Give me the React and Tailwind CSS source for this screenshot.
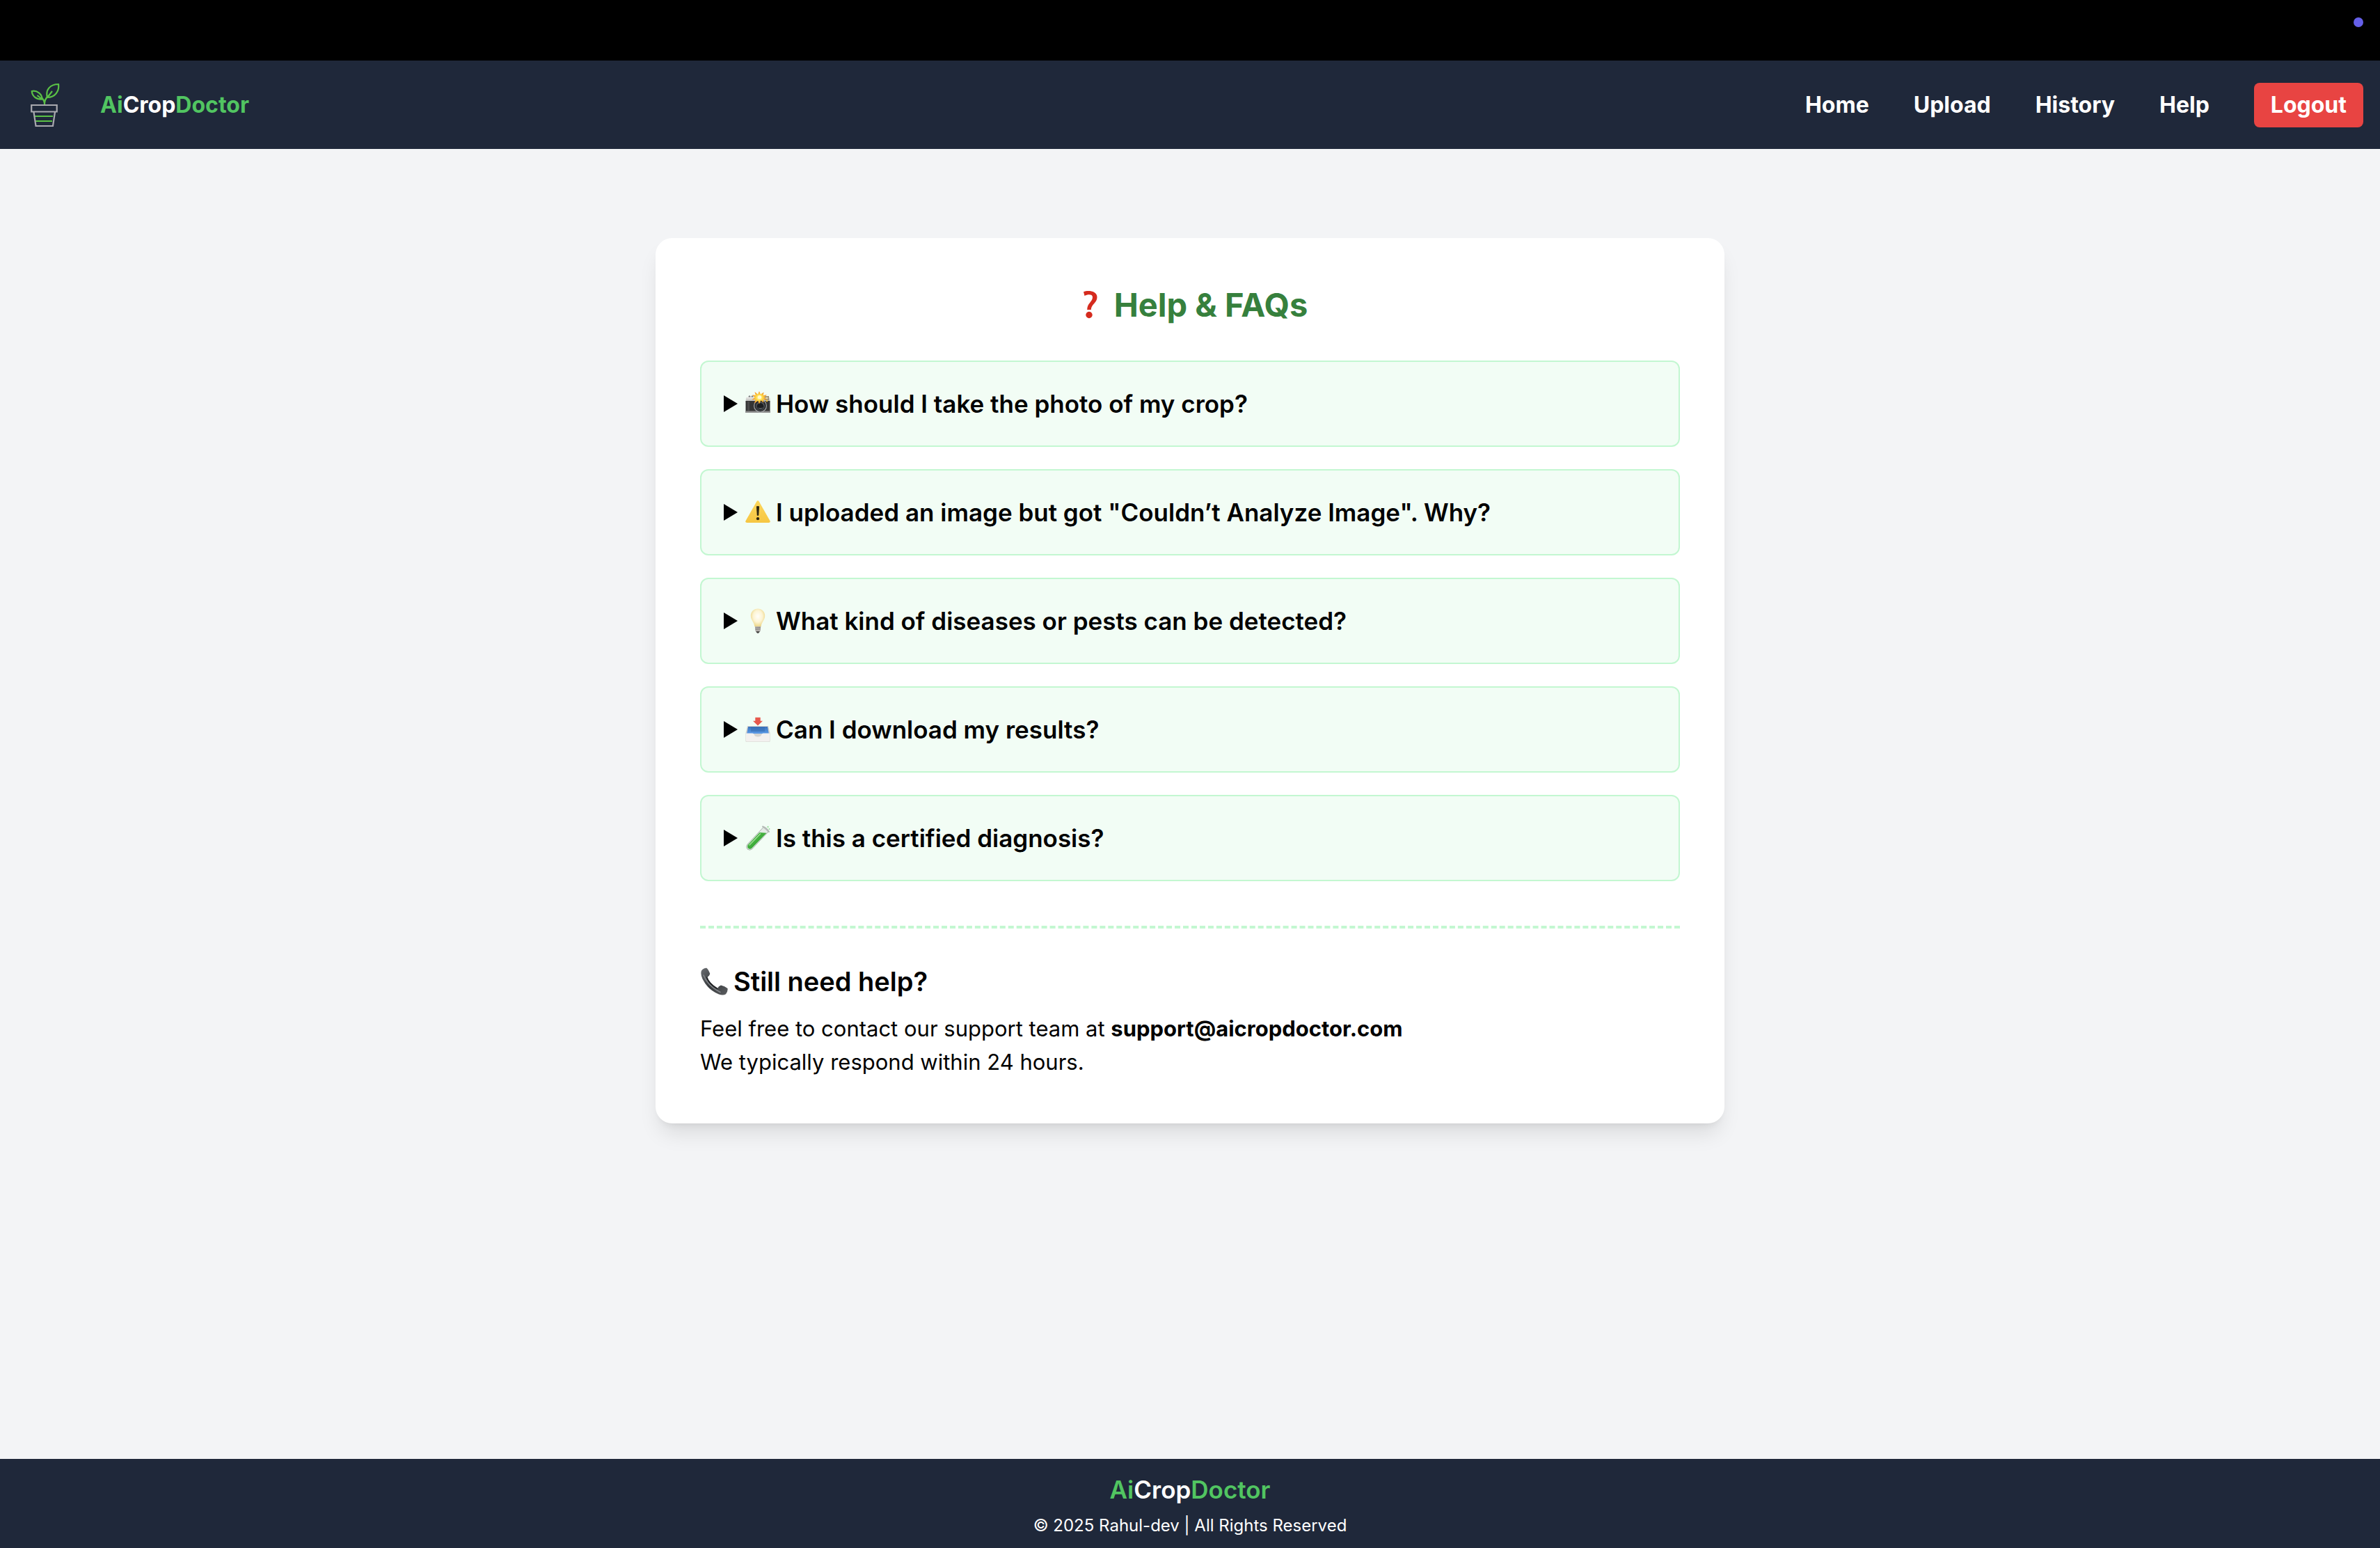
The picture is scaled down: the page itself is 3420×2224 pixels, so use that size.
import React from "react";

const svgProps = { viewBox: "0 0 36 36", "aria-hidden": true };

function QuestionMark() {
  return (
    <svg viewBox="0 0 48 48" aria-hidden="true" className="size-12 shrink-0">
      <path
        d="M16 5.200C22 3 35.500 3.500 35.500 13C35.500 21 26.800 23.500 26.800 31H21.200C21.200 21.500 29 19.500 29 13C29 8.500 22.500 8.500 17.500 11z"
        fill="#d52b1e"
      />
      <circle cx="24" cy="38.500" r="4.700" fill="#d52b1e" />
    </svg>
  );
}

function Camera() {
  return (
    <svg {...svgProps} className="size-9 shrink-0">
      <defs>
        <linearGradient id="camTop" x1="0" y1="0" x2="0" y2="1">
          <stop offset="0" stopColor="#ececea" />
          <stop offset="1" stopColor="#a9a9a7" />
        </linearGradient>
        <radialGradient id="camFlash">
          <stop offset="0" stopColor="#fffde0" />
          <stop offset="0.4" stopColor="#ffe04d" />
          <stop offset="1" stopColor="#f28a1c" />
        </radialGradient>
      </defs>
      <path d="M4 7h8v3H4z" fill="#c9cbc9" />
      <path d="M5 6.500h2v3H5zM9 6.500h2v3H9z" fill="#77797b" />
      <path d="M1 9.500q0-1 1-1h32q1.500 0 1.500 1.500v6H0.500z" fill="url(#camTop)" />
      <path d="M0.500 14h35v16.500q0 .5-.5.500H1q-.5 0-.5-.5z" fill="#343434" />
      <path d="M0.500 28.500h35V31h-35z" fill="#8f8f8f" />
      <path d="M3 15h3v13H3z" fill="#4b4b4b" />
      <rect x="27.500" y="7" width="6.500" height="6" fill="#9a8f78" />
      <rect x="29" y="8.500" width="3.500" height="3" fill="#d9cba5" />
      <circle cx="21.500" cy="21" r="9.500" fill="#a2a4a6" />
      <circle cx="21.500" cy="21" r="8.300" fill="#27292b" />
      <circle cx="21.500" cy="21.500" r="6.300" fill="#55585c" />
      <circle cx="21.500" cy="22" r="5" fill="#1b1d20" />
      <path d="M17 23q4.500 3 9 0-4 5.500-9 0z" fill="#7d8287" />
      <path
        d="M20 0l2 4.500L26.500 1.500l-.7 4.500 5-.8-3.600 3.800 3.600 3.500-5-.6.500 4.800-4-3.400L20 18.500l-1.800-4.700L13 17.500l1.500-5.500-5 .3L13.500 9 10 5.500l4.800.3L13.500 1l4.500 3.500z"
        fill="url(#camFlash)"
      />
      <circle cx="20.500" cy="8.500" r="2.600" fill="#fffbd2" />
      <circle cx="31" cy="14" r="1.200" fill="#ffc933" />
    </svg>
  );
}

function Warning() {
  return (
    <svg {...svgProps} className="size-9 shrink-0">
      <defs>
        <linearGradient id="warnFill" x1="0" y1="0" x2="0" y2="1">
          <stop offset="0" stopColor="#fbd65c" />
          <stop offset="1" stopColor="#f6c642" />
        </linearGradient>
      </defs>
      <path
        d="M16.300 2.500q1.700-2.500 3.400 0L35.300 30q1.400 3-1.800 3H2.500q-3.200 0-1.800-3z"
        fill="url(#warnFill)"
      />
      <path d="M15.900 9.500q2.100-1 4.200 0L19.200 22.500q-1.200.8-2.400 0z" fill="#2c2510" />
      <circle cx="18" cy="27.200" r="2.100" fill="#2c2510" />
    </svg>
  );
}

function Bulb() {
  return (
    <svg {...svgProps} className="size-9 shrink-0">
      <defs>
        <radialGradient id="bulbGlass" cx="0.5" cy="0.42" r="0.58">
          <stop offset="0" stopColor="#fffefa" />
          <stop offset="0.55" stopColor="#fdf4d3" />
          <stop offset="1" stopColor="#ecd585" />
        </radialGradient>
      </defs>
      <path
        d="M18 .5c6 0 10.200 4.500 10.200 10.200C28.200 17 23.500 19 22.500 26.500h-9C12.500 19 7.800 17 7.800 10.700 7.800 5 12 .5 18 .5z"
        fill="url(#bulbGlass)"
      />
      <path d="M14 26h8.200l-.4 6.500q-1 1.500-3.700 1.500t-3.700-1.500z" fill="#b4b0ad" />
      <path d="M14 28.300l8-1M14.300 30.600l7.600-1" stroke="#7f7b78" strokeWidth="0.800" />
      <path d="M15.300 33h5.500q-1 3-2.800 3t-2.700-3z" fill="#4b4947" />
    </svg>
  );
}

function Inbox() {
  return (
    <svg {...svgProps} className="size-9 shrink-0">
      <defs>
        <linearGradient id="trayFill" x1="0" y1="0" x2="0" y2="1">
          <stop offset="0" stopColor="#3a74bd" />
          <stop offset="1" stopColor="#5b9ae6" />
        </linearGradient>
      </defs>
      <path d="M3 13h30l2.500 10v12q0 .8-.8.800H1.300q-.8 0-.8-.8V23z" fill="#d5d4d0" />
      <path d="M4 14h28l1.800 10H2.200z" fill="url(#trayFill)" />
      <path d="M8 14h20v7H8z" fill="#376eb3" opacity="0.600" />
      <path
        d="M1 24.300q0-.8.800-.8h8.700q1.500 0 2 1.500 1 3.500 5.500 3.500t5.500-3.500q.5-1.500 2-1.500h8.700q.8 0 .8.800V34q0 1.200-1.200 1.200H2.200Q1 35.200 1 34z"
        fill="#f3f1ef"
      />
      <path d="M14.300.7h7.400v5H25L18 12.500 11 5.700h3.300z" fill="#e7584c" />
    </svg>
  );
}

function TestTube() {
  return (
    <svg {...svgProps} className="size-9 shrink-0">
      <defs>
        <linearGradient id="tubeFill" x1="0" y1="0" x2="1" y2="1">
          <stop offset="0" stopColor="#58b84e" />
          <stop offset="0.500" stopColor="#3fae3c" />
          <stop offset="1" stopColor="#227f2a" />
        </linearGradient>
      </defs>
      <path
        d="M26 2.500L33 9 9.500 34q-3 2.500-6.500 0-3-3.500 0-7z"
        fill="#e4ebe6"
        stroke="#a3aaa6"
        strokeWidth="0.900"
      />
      <path d="M20.500 10l10 .8L9.200 32.800q-2.500 2-5.200 0-2-2.800.2-5.600z" fill="url(#tubeFill)" />
      <path d="M5.500 28.500L22 11.500" stroke="#a6e09c" strokeWidth="1.200" />
      <path d="M25 1.500q5.500 2 9 7.500" fill="none" stroke="#b4bab6" strokeWidth="2" strokeLinecap="round" />
      <circle cx="32.500" cy="2" r="1.300" fill="#a8e6ac" />
      <circle cx="34.500" cy="5" r="0.900" fill="#8bdc92" />
    </svg>
  );
}

function Phone() {
  return (
    <svg viewBox="0 0 40 40" aria-hidden="true" className="size-10 shrink-0">
      <defs>
        <linearGradient id="phoneFill" x1="0" y1="0" x2="1" y2="1">
          <stop offset="0" stopColor="#6b6e72" />
          <stop offset="0.500" stopColor="#36393c" />
          <stop offset="1" stopColor="#5d5f62" />
        </linearGradient>
      </defs>
      <path
        d="M2 4.500Q5.500.2 9.500.8q2.800 2.700 4.700 7.700-.2 3.200-4 5.500Q13 22.500 25 30q1.500-3.500 5-4.500 5.500 1 9.500 4.500.8 3.500-2.500 8.300-4 2.500-10 .2Q11 32 3.500 16.500.2 9.500 2 4.500z"
        fill="url(#phoneFill)"
      />
      <path d="M5 11Q10.500 26 29 35.500" fill="none" stroke="#85888c" strokeWidth="1.500" strokeLinecap="round" />
      <path d="M9.500 13.500Q12.500 23 25 30.500" fill="none" stroke="#1c1e20" strokeWidth="1.500" />
    </svg>
  );
}

function PlantLogo() {
  return (
    <svg viewBox="0 0 42 64" fill="none" aria-hidden="true" className="h-16 w-[42px]">
      <g stroke="#5ac146" strokeWidth="2.200">
        <path d="M20 31C20 25 21.500 22 25 19.500M20 31C20 26 18 23.500 16 22" />
        <path d="M24 21C21 10 28 2 40 2C41.500 12 35 21 24 21zM24 21L31 12" />
        <path d="M16.500 23.500C8 24 2 19 1.800 12C9 10.500 16.500 16 16.500 23.500zM16.500 23.500L9.500 18" />
        <path d="M6 48h26M7 55h24" />
      </g>
      <g stroke="#a9a9af" strokeWidth="2.200">
        <path d="M1.200 32h36.500v9.500H1.200zM4.500 42l3 20h24.500l3-20" />
      </g>
    </svg>
  );
}

function Brand() {
  return (
    <>
      <span className="text-[#51c561]">Ai</span>
      <span className="text-white">Crop</span>
      <span className="text-[#51c561]">Doctor</span>
    </>
  );
}

const links = ["Home", "Upload", "History", "Help"];

const faqs = [
  {
    icon: <Camera />,
    question: "How should I take the photo of my crop?",
    answer: "Take a clear, well-lit photo of the affected leaf or plant.",
  },
  {
    icon: <Warning />,
    question: "I uploaded an image but got \"Couldn’t Analyze Image\". Why?",
    answer: "The photo may be blurry or too dark. Try another one.",
  },
  {
    icon: <Bulb />,
    question: "What kind of diseases or pests can be detected?",
    answer: "Common leaf diseases and pests of most crops.",
  },
  {
    icon: <Inbox />,
    question: "Can I download my results?",
    answer: "Yes, from the History page.",
  },
  {
    icon: <TestTube />,
    question: "Is this a certified diagnosis?",
    answer: "No. Please consult an expert before treatment.",
  },
];

export default function App() {
  return (
    <div className="flex min-h-screen flex-col bg-[#f3f4f6] font-['Inter',sans-serif] text-black">
      <div className="flex h-[87px] justify-end bg-black px-6 pt-[25px]">
        <span className="size-3.5 rounded-full bg-[#655fe8]" />
      </div>

      <header className="flex h-[127px] items-center justify-between bg-[#1f283a] pr-6 pl-11">
        <div className="flex items-center gap-[58px]">
          <PlantLogo />
          <a href="#home" className="text-[32px] leading-12 font-bold">
            <Brand />
          </a>
        </div>
        <nav className="flex items-center gap-16 text-[32px] leading-12 font-bold text-white">
          {links.map((label) => (
            <a key={label} href={"#" + label.toLowerCase()}>
              {label}
            </a>
          ))}
          <button type="button" className="rounded-lg bg-[#e84442] px-6 py-2">
            Logout
          </button>
        </nav>
      </header>

      <main className="flex-1 px-8 py-32">
        <section className="mx-auto max-w-[1536px] rounded-3xl bg-white p-16 shadow-[0_20px_30px_-6px_rgba(0,0,0,0.1),0_8px_12px_-8px_rgba(0,0,0,0.1)]">
          <h1 className="mb-12 flex items-center justify-center gap-3 text-[47px] leading-16 font-bold text-[#36803d]">
            <QuestionMark />
            Help &amp; FAQs
          </h1>

          <div className="flex flex-col gap-8">
            {faqs.map(({ icon, question, answer }) => (
              <details
                key={question}
                className="group rounded-xl border-2 border-[#c3f7d1] bg-[#f2fdf5] p-8"
              >
                <summary className="flex cursor-pointer list-none items-center text-[35px] leading-14 font-semibold">
                  <svg
                    viewBox="0 0 20 24"
                    aria-hidden="true"
                    className="mr-[11px] h-6 w-5 shrink-0 group-open:rotate-90"
                  >
                    <path d="M0 0L20 12L0 24z" />
                  </svg>
                  {icon}
                  <span className="ml-2">{question}</span>
                </summary>
                <p className="mt-4 text-[31px] leading-12">{answer}</p>
              </details>
            ))}
          </div>

          <div className="mt-16 border-t-4 border-dashed border-[#c3f7d1] pt-12">
            <h2 className="flex items-center gap-2 text-[38px] leading-14 font-semibold">
              <Phone />
              Still need help?
            </h2>
            <p className="mt-4 text-[31px] leading-12">
              Feel free to contact our support team at{" "}
              <a href="mailto:support@aicropdoctor.com" className="font-bold">
                support@aicropdoctor.com
              </a>
              <br />
              We typically respond within 24 hours.
            </p>
          </div>
        </section>
      </main>

      <footer className="bg-[#1f283a] py-4 text-center text-white">
        <p className="text-[35px] leading-14 font-semibold">
          <Brand />
        </p>
        <p className="mt-2 text-[24px] leading-8">© 2025 Rahul-dev | All Rights Reserved</p>
      </footer>
    </div>
  );
}
